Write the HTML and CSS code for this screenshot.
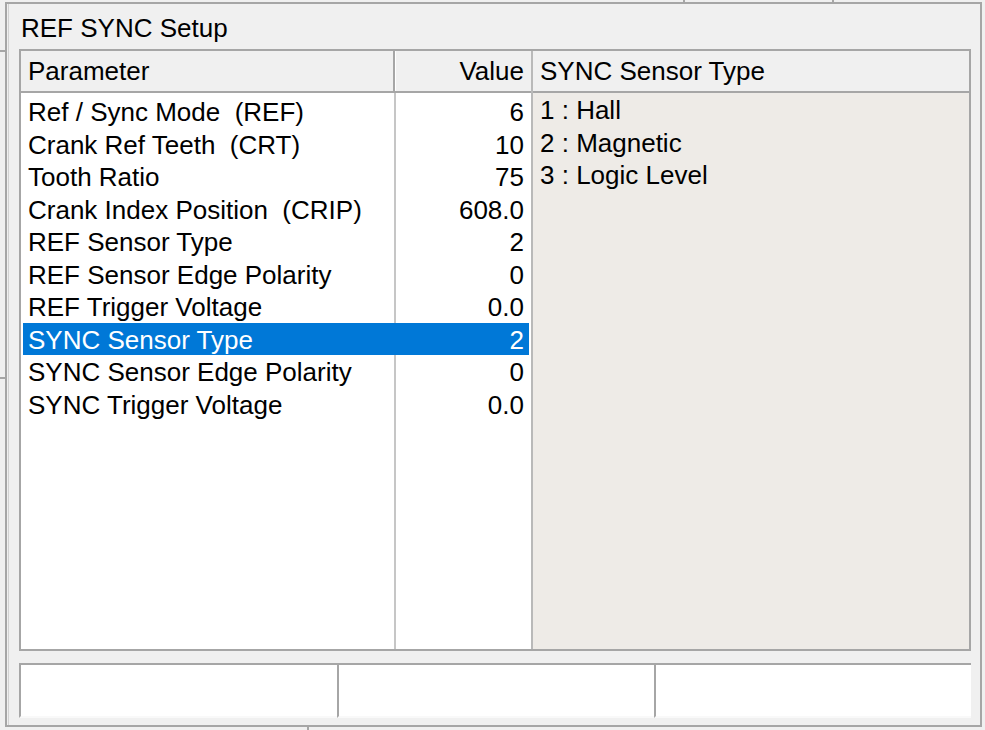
FILE: index.html
```html
<!DOCTYPE html>
<html>
<head>
<meta charset="utf-8">
<title>REF SYNC Setup</title>
<link rel="stylesheet" href="styles.css">
</head>
<body>
<div class="screen">
  <span class="edge edge-left-a"></span>
  <span class="edge edge-left-b"></span>
  <span class="edge edge-top-a"></span>
  <span class="edge edge-top-b"></span>
  <span class="edge edge-bottom-a"></span>
  <div class="dialog">
    <div class="title">REF SYNC Setup</div>
    <div class="list">
      <div class="panel params">
        <div class="hdr">
          <div class="hcell hparam">Parameter</div>
          <div class="hcell hvalue">Value</div>
        </div>
        <div class="rows">
          <div class="row"><span class="name">Ref / Sync Mode  (REF)</span><span class="val">6</span></div>
          <div class="row"><span class="name">Crank Ref Teeth  (CRT)</span><span class="val">10</span></div>
          <div class="row"><span class="name">Tooth Ratio</span><span class="val">75</span></div>
          <div class="row"><span class="name">Crank Index Position  (CRIP)</span><span class="val">608.0</span></div>
          <div class="row"><span class="name">REF Sensor Type</span><span class="val">2</span></div>
          <div class="row"><span class="name">REF Sensor Edge Polarity</span><span class="val">0</span></div>
          <div class="row"><span class="name">REF Trigger Voltage</span><span class="val">0.0</span></div>
          <div class="row sel"><span class="name">SYNC Sensor Type</span><span class="val">2</span></div>
          <div class="row"><span class="name">SYNC Sensor Edge Polarity</span><span class="val">0</span></div>
          <div class="row"><span class="name">SYNC Trigger Voltage</span><span class="val">0.0</span></div>
        </div>
      </div>
      <div class="panel options">
        <div class="hdr">
          <div class="hcell hopt">SYNC Sensor Type</div>
        </div>
        <div class="opts">
          <div class="opt">1 : Hall</div>
          <div class="opt">2 : Magnetic</div>
          <div class="opt">3 : Logic Level</div>
        </div>
      </div>
    </div>
    <div class="status">
      <div class="pane p1"></div>
      <div class="pane p2"></div>
      <div class="pane p3"></div>
    </div>
  </div>
</div>
</body>
</html>
```

FILE: styles.css
```css
* { box-sizing: border-box; }
html, body { margin: 0; padding: 0; }
body {
  background: #f0f0f0;
  font-family: "Liberation Sans", Arial, sans-serif;
  font-size: 26px;
  color: #000;
  width: 985px;
  height: 730px;
  overflow: hidden;
}
.screen {
  position: relative;
  width: 985px;
  height: 730px;
  padding: 2px 0 0 5px;
}
/* edges of windows lying behind the dialog */
.edge { position: absolute; background: #a6a6a6; }
.edge-left-a { left: 0; top: 50px; width: 5px; height: 2px; }
.edge-left-b { left: 0; top: 377px; width: 5px; height: 2px; }
.edge-top-a { left: 683px; top: 0; width: 2px; height: 2px; }
.edge-top-b { left: 832px; top: 0; width: 2px; height: 2px; }
.edge-bottom-a { left: 307px; top: 727px; width: 2px; height: 3px; }

.dialog {
  width: 977px;
  height: 725px;
  border: 2px solid #a6a6a6;
  box-shadow: inset 1px 0 0 #f0f0f0, inset 2px 0 0 #d2d2d2;
  display: flex;
  flex-direction: column;
}
.title {
  margin: 9px 0 0 14px;
  height: 30px;
  line-height: 30px;
  white-space: nowrap;
}
.list {
  margin: 6px 0 0 12px;
  width: 952px;
  height: 602px;
  border: 2px solid #a6a6a6;
  display: flex;
  background: #fff;
}
.panel { display: flex; flex-direction: column; }
.params {
  width: 512px;
  border-right: 2px solid #b9b9b9;
}
.options { flex: 1; }
.hdr {
  height: 42px;
  border-bottom: 2px solid #a6a6a6;
  background: #f0f0f0;
  display: flex;
  white-space: nowrap;
}
.hcell { line-height: 40px; }
.hparam {
  width: 374px;
  padding-left: 7px;
  border-right: 2px solid #a6a6a6;
  box-shadow: 1px 0 0 #ffffff;
}
.hvalue {
  flex: 1;
  text-align: right;
  padding-right: 7px;
}
.hopt { padding-left: 7px; }

.rows {
  flex: 1;
  padding-top: 2px;
  background: linear-gradient(#c6c6c6, #c6c6c6) no-repeat 373px 0 / 2px 100%;
}
.row {
  display: flex;
  height: 32.5px;
  line-height: 34.5px;
  margin: 0 2px;
  white-space: pre;
}
.name { width: 371px; padding-left: 5px; }
.val { flex: 1; text-align: right; padding-right: 5px; }
.row.sel { background: #0078d7; color: #fff; }

.opts {
  flex: 1;
  background: #eeebe7;
}
.opt {
  height: 32.5px;
  line-height: 34px;
  padding-left: 7px;
  white-space: nowrap;
}

.status {
  margin: 12px 0 0 12px;
  width: 952px;
  height: 55px;
  display: flex;
}
.pane {
  background: #fff;
  border-top: 2px solid #a6a6a6;
  border-left: 2px solid #a6a6a6;
  border-bottom: 2px solid #f9f9f9;
}
.p1 { width: 318px; }
.p2 { width: 317px; }
.p3 { width: 317px; }
```
